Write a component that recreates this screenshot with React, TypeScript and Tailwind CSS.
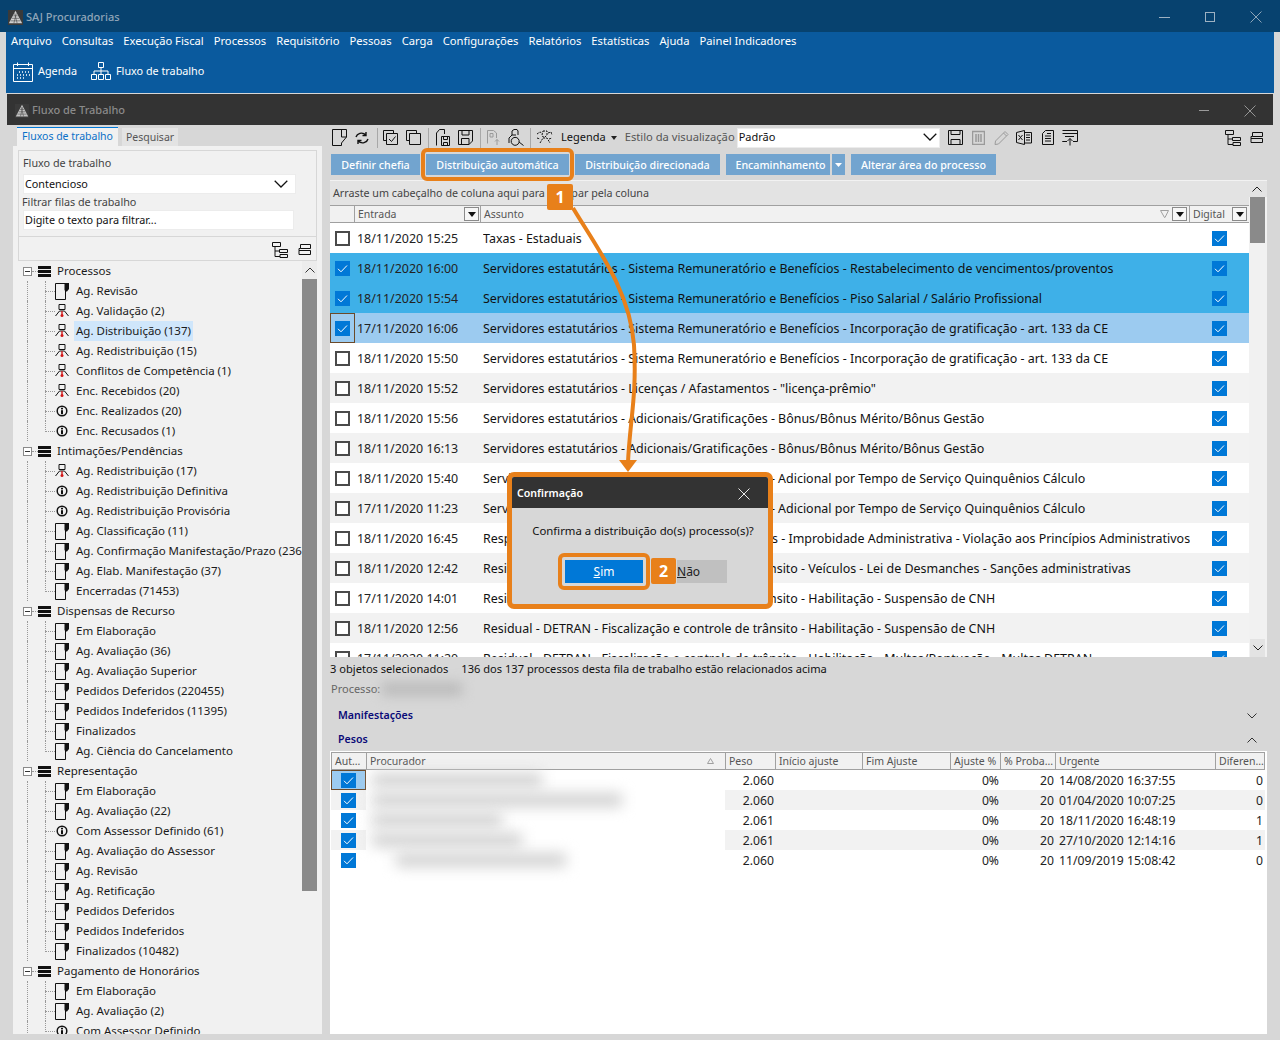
import React from "react";

const FONT = "[font-family:'Noto_Sans','Open_Sans',sans-serif]";

const Logo = ({ s = 18, c = "#c8c8c8" }: { s?: number; c?: string }) => (
  <svg width={s} height={s} viewBox="0 0 18 18" className="shrink-0">
    <rect width="18" height="18" fill="#3a3a3a" />
    <polygon points="9,1 17,16 1,16" fill={c} />
    <g stroke="#444" strokeWidth="0.7">
      <line x1="3" y1="13" x2="15" y2="13" />
      <line x1="4.8" y1="10" x2="13.2" y2="10" />
      <line x1="6.4" y1="7" x2="11.6" y2="7" />
      <line x1="7" y1="16" x2="10" y2="4" />
      <line x1="11" y1="16" x2="8" y2="4" />
    </g>
  </svg>
);

const WinX = ({ s, c }: { s: number; c: string }) => (
  <svg width={s} height={s} viewBox="0 0 12 12"><path d="M0.5 0.5L11.5 11.5M11.5 0.5L0.5 11.5" stroke={c} strokeWidth="0.9" fill="none" /></svg>
);

const Check = ({ on, s = 15 }: { on: boolean; s?: number }) =>
  on ? (
    <svg width={s} height={s} viewBox="0 0 15 15" className="shrink-0">
      <rect width="15" height="15" fill="#0078d7" />
      <path d="M3 7.8L6 10.8L12 4.5" stroke="#fff" strokeWidth="1" fill="none" />
    </svg>
  ) : (
    <span className="block w-[15px] h-[15px] shrink-0 border-2 border-[#4a4a4a] bg-white" />
  );

const Ic = ({ w = 16, h = 16, children }: { w?: number; h?: number; children: React.ReactNode }) => (
  <svg width={w} height={h} viewBox={`0 0 ${w} ${h}`} fill="none" stroke="#111" strokeWidth="1" className="shrink-0">{children}</svg>
);

const DocIcon = () => (
  <svg width="14" height="17" viewBox="0 0 14 17" className="shrink-0" fill="none">
    <path d="M10 0.5H0.5V16.5H10.5V8" stroke="#111" />
    <path d="M9.5 0H14V6L12 8.5H10.5L9.5 7Z" fill="#111" />
  </svg>
);
const PersonIcon = () => (
  <svg width="14" height="16" viewBox="0 0 14 16" className="shrink-0" fill="none">
    <path d="M4 1.5H10V6.5H4Z" stroke="#111" />
    <path d="M4.5 8H9.5M4.5 8L0.5 13M9.5 8L13.5 13" stroke="#111" />
    <path d="M7 8V12" stroke="#d01818" strokeWidth="1.4" />
    <circle cx="7" cy="12.5" r="1.5" fill="#d01818" />
  </svg>
);
const InfoIcon = () => (
  <svg width="14" height="14" viewBox="0 0 14 14" className="shrink-0" fill="none">
    <circle cx="7" cy="7" r="4.8" stroke="#111" strokeWidth="1.5" />
    <rect x="6" y="3.8" width="2" height="1.6" fill="#111" />
    <rect x="6" y="6.2" width="2" height="4" fill="#111" />
  </svg>
);
const GroupIcon = () => (
  <svg width="13" height="11" viewBox="0 0 13 11" className="shrink-0">
    <rect width="13" height="3" fill="#111" />
    <rect y="4" width="13" height="3" fill="#111" />
    <rect y="8" width="13" height="3" fill="#111" />
  </svg>
);

const ExpandAll = () => (
  <Ic w={16} h={16}>
    <path d="M0.5 0.5H8.5V4.5H0.5ZM3 4.5V14.5H8M3 9H7M7.5 7.5H15.5V10.5H7.5ZM8 12.5H15.5V15.5H8Z" />
  </Ic>
);
const CollapseAll = () => (
  <Ic w={14} h={14}>
    <path d="M2.5 1.5H12.5V5.5H2.5ZM1 7.5H12.5V11.5H1ZM1 7.5V5.5H2.5" />
  </Ic>
);

type Kind = "doc" | "person" | "info";
type Node = { t: string; k: Kind; sel?: boolean };
const tree: { name: string; items: Node[] }[] = [
  {
    name: "Processos",
    items: [
      { t: "Ag. Revisão", k: "doc" },
      { t: "Ag. Validação (2)", k: "person" },
      { t: "Ag. Distribuição (137)", k: "person", sel: true },
      { t: "Ag. Redistribuição (15)", k: "person" },
      { t: "Conflitos de Competência (1)", k: "person" },
      { t: "Enc. Recebidos (20)", k: "person" },
      { t: "Enc. Realizados (20)", k: "info" },
      { t: "Enc. Recusados (1)", k: "info" },
    ],
  },
  {
    name: "Intimações/Pendências",
    items: [
      { t: "Ag. Redistribuição (17)", k: "person" },
      { t: "Ag. Redistribuição Definitiva", k: "info" },
      { t: "Ag. Redistribuição Provisória", k: "info" },
      { t: "Ag. Classificação (11)", k: "doc" },
      { t: "Ag. Confirmação Manifestação/Prazo (236)", k: "doc" },
      { t: "Ag. Elab. Manifestação (37)", k: "doc" },
      { t: "Encerradas (71453)", k: "doc" },
    ],
  },
  {
    name: "Dispensas de Recurso",
    items: [
      { t: "Em Elaboração", k: "doc" },
      { t: "Ag. Avaliação (36)", k: "doc" },
      { t: "Ag. Avaliação Superior", k: "doc" },
      { t: "Pedidos Deferidos (220455)", k: "doc" },
      { t: "Pedidos Indeferidos (11395)", k: "doc" },
      { t: "Finalizados", k: "doc" },
      { t: "Ag. Ciência do Cancelamento", k: "doc" },
    ],
  },
  {
    name: "Representação",
    items: [
      { t: "Em Elaboração", k: "doc" },
      { t: "Ag. Avaliação (22)", k: "doc" },
      { t: "Com Assessor Definido (61)", k: "info" },
      { t: "Ag. Avaliação do Assessor", k: "doc" },
      { t: "Ag. Revisão", k: "doc" },
      { t: "Ag. Retificação", k: "doc" },
      { t: "Pedidos Deferidos", k: "doc" },
      { t: "Pedidos Indeferidos", k: "doc" },
      { t: "Finalizados (10482)", k: "doc" },
    ],
  },
  {
    name: "Pagamento de Honorários",
    items: [
      { t: "Em Elaboração", k: "doc" },
      { t: "Ag. Avaliação (2)", k: "doc" },
      { t: "Com Assessor Definido", k: "info" },
    ],
  },
];

const SV = "Servidores estatutários - Sistema Remuneratório e Benefícios - ";
const AD = "Servidores estatutários - Adicionais/Gratificações - ";
const DT = "Residual - DETRAN - Fiscalização e controle de trânsito - ";
const rows = [
  { d: "18/11/2020 15:25", s: "Taxas - Estaduais" },
  { d: "18/11/2020 16:00", s: SV + "Restabelecimento de vencimentos/proventos", st: "sel" },
  { d: "18/11/2020 15:54", s: SV + "Piso Salarial / Salário Profissional", st: "sel" },
  { d: "17/11/2020 16:06", s: SV + "Incorporação de gratificação - art. 133 da CE", st: "cur" },
  { d: "18/11/2020 15:50", s: SV + "Incorporação de gratificação - art. 133 da CE" },
  { d: "18/11/2020 15:52", s: 'Servidores estatutários - Licenças / Afastamentos - "licença-prêmio"' },
  { d: "18/11/2020 15:56", s: AD + "Bônus/Bônus Mérito/Bônus Gestão" },
  { d: "18/11/2020 16:13", s: AD + "Bônus/Bônus Mérito/Bônus Gestão" },
  { d: "18/11/2020 15:40", s: AD + "Adicional por Tempo de Serviço Quinquênios Cálculo" },
  { d: "17/11/2020 11:23", s: AD + "Adicional por Tempo de Serviço Quinquênios Cálculo" },
  { d: "18/11/2020 16:45", s: "Responsabilidade do Estado - Atos Administrativos - Improbidade Administrativa - Violação aos Princípios Administrativos" },
  { d: "18/11/2020 12:42", s: DT + "Veículos - Lei de Desmanches - Sanções administrativas" },
  { d: "17/11/2020 14:01", s: DT + "Habilitação - Suspensão de CNH" },
  { d: "18/11/2020 12:56", s: DT + "Habilitação - Suspensão de CNH" },
  { d: "17/11/2020 11:20", s: DT + "Habilitação - Multas/Pontuação - Multas DETRAN" },
];

const pesos = [
  { p: "2.060", u: "14/08/2020 16:37:55", x: "0", b: "w-[170px] ml-[6px]" },
  { p: "2.060", u: "01/04/2020 10:07:25", x: "0", b: "w-[250px] ml-[6px]" },
  { p: "2.061", u: "18/11/2020 16:48:19", x: "1", b: "w-[130px] ml-[6px]" },
  { p: "2.061", u: "27/10/2020 12:14:16", x: "1", b: "w-[150px] ml-[6px]" },
  { p: "2.060", u: "11/09/2019 15:08:42", x: "0", b: "w-[170px] ml-[30px]" },
];

const menu = ["Arquivo", "Consultas", "Execução Fiscal", "Processos", "Requisitório", "Pessoas", "Carga", "Configurações", "Relatórios", "Estatísticas", "Ajuda", "Painel Indicadores"];

const Sep = () => <span className="block w-px h-5 bg-[#a8a8a8] shrink-0" />;

const HdrDrop = () => (
  <span className="w-[15px] h-[14px] border border-[#8a8a8a] bg-[#f6f6f6] flex items-center justify-center shrink-0">
    <svg width="8" height="5" viewBox="0 0 8 5"><path d="M0 0H8L4 5Z" fill="#111" /></svg>
  </span>
);

const Chevron = ({ up, c = "#333", w = 10 }: { up?: boolean; c?: string; w?: number }) => (
  <svg width={w} height={w * 0.6} viewBox="0 0 10 6" fill="none" className="shrink-0">
    <path d={up ? "M0.5 5.5L5 1L9.5 5.5" : "M0.5 0.5L5 5L9.5 0.5"} stroke={c} strokeWidth={w > 10 ? 0.9 : 1} />
  </svg>
);

const Btn = ({ w, children }: { w: string; children: React.ReactNode }) => (
  <div className={`${w} h-[21px] pt-[2px] bg-[#72a4cf] text-white font-medium flex items-center justify-center text-[10.7px] shrink-0`}>{children}</div>
);

export default function App() {
  return (
    <div className={`${FONT} relative w-[1280px] h-[1040px] overflow-hidden bg-[#d7d7d7] text-[12px] text-[#1a1a1a] flex flex-col`}>
      {/* Title bar */}
      <div className="h-8 shrink-0 bg-[#07426f] flex items-center pl-[8px] pt-[2px] text-[11px] font-medium text-[#8fa5b8]">
        <Logo s={15} c="#d0d0d0" />
        <span className="ml-[3px] flex-1">SAJ Procuradorias</span>
        <span className="w-[11px] h-px bg-[#9db1c2]" />
        <span className="ml-[35px] w-[10px] h-[10px] border border-[#9db1c2]" />
        <span className="ml-[35px] mr-[18px]"><WinX s={12} c="#9db1c2" /></span>
      </div>

      {/* Menu */}
      <div className="h-[61px] shrink-0 ml-[6px] mr-[6px] bg-[#0a5a9e] text-white flex flex-col">
        <div className="h-[20px] flex items-center gap-[10px] pl-[5px] pb-[2px] text-[11.2px]">
          {menu.map((m) => <span key={m}>{m}</span>)}
        </div>
        <div className="flex-1 flex items-center pl-[7px] pb-[2px] text-[10.8px]">
          <svg width="20" height="20" viewBox="0 0 20 20" fill="none" stroke="#fff" className="shrink-0">
            <path d="M0.5 2.5H19.5V19.5H0.5ZM0.5 6.5H19.5M4.5 0.5V4M15.5 0.5V4" />
            <path d="M6 10h1M9 10h1M12 10h1M15 10h1M4 13h1M7 13h1M10 13h1M13 13h1M16 13h1M4 16h1M7 16h1M10 16h1" strokeWidth="1.4" />
          </svg>
          <span className="ml-[5px]">Agenda</span>
          <svg width="20" height="19" viewBox="0 0 20 19" fill="none" stroke="#fff" className="ml-[14px] shrink-0">
            <path d="M7.5 0.5H12.5V5.5H7.5ZM10 5.5V9M3 12V9H17V12M10 9V12M0.5 12.5H5.5V17.5H0.5ZM7.5 12.5H12.5V17.5H7.5ZM14.5 12.5H19.5V17.5H14.5Z" />
          </svg>
          <span className="ml-[5px]">Fluxo de trabalho</span>
        </div>
      </div>

      {/* Inner window title */}
      <div className="h-[31px] mt-[1px] shrink-0 ml-[7px] mr-[7px] bg-[#333] flex items-center pl-[8px] pt-[2px] text-[11px] font-medium text-[#8a8a8a]">
        <Logo s={14} c="#c4c4c4" />
        <span className="ml-[3px] flex-1">Fluxo de Trabalho</span>
        <span className="w-[10px] h-px bg-[#9a9a9a]" />
        <span className="ml-[35px] mr-[17px]"><WinX s={12} c="#a0a0a0" /></span>
      </div>

      {/* Body */}
      <div className="flex-1 min-h-0 flex pb-[6px]">
        {/* Left column */}
        <div className="w-[322px] shrink-0 pl-[13px] flex flex-col">
          <div className="h-[21px] shrink-0 flex items-end pl-[4px] text-[10.5px]">
            <div className="h-[19px] w-[101px] border-t border-[#0078d7] bg-[#f1f1f1] text-[#0a70c8] text-center leading-[17px]">Fluxos de trabalho</div>
            <div className="ml-[4px] h-[18px] w-[56px] bg-[#e3e3e3] text-[#555] text-center leading-[18px]">Pesquisar</div>
          </div>
          <div className="flex-1 min-h-0 bg-[#f1f1f1] flex flex-col">
            <div className="mx-[5px] mt-[4px] border border-[#d7d7d7] h-[87px] shrink-0 px-[4px] pt-[4px] text-[10.8px] text-[#444]">
              <div className="leading-[15px]">Fluxo de trabalho</div>
              <div className="mt-[4px] w-[273px] h-[20px] bg-white border border-[#ececec] flex items-center pl-[1px] pr-[7px] text-[#111]">
                <span className="flex-1">Contencioso</span>
                <Chevron c="#111" w={14} />
              </div>
              <div className="leading-[15px] -ml-[1px]">Filtrar filas de trabalho</div>
              <div className="mt-[1px] w-[271px] h-[20px] bg-white border border-[#ececec] flex items-center pl-[1px] text-[#111]">Digite o texto para filtrar...</div>
            </div>
            <div className="mx-[5px] h-[24px] shrink-0 flex items-center justify-end gap-[10px] pr-[4px] border-x border-b border-[#d7d7d7] pt-[2px]">
              <ExpandAll />
              <CollapseAll />
            </div>
            <div className="flex-1 min-h-0 mx-[5px] flex overflow-hidden">
              <div className="flex-1 min-w-0 overflow-hidden text-[11.5px] leading-[20px]">
                {tree.map((g) => (
                  <div key={g.name}>
                    <div className="h-5 flex items-center">
                      <span className="ml-[5px] w-[9px] h-[9px] border border-[#8a8a8a] bg-white flex items-center justify-center shrink-0">
                        <span className="w-[5px] h-px bg-[#333]" />
                      </span>
                      <span className="w-[6px] border-t border-dotted border-[#999] shrink-0" />
                      <GroupIcon />
                      <span className="ml-[6px] whitespace-nowrap">{g.name}</span>
                    </div>
                    {g.items.map((n, i) => (
                      <div key={n.t + i} className="h-5 flex items-center">
                        <span className="ml-[9px] w-[18px] h-full border-l border-dotted border-[#999] shrink-0" />
                        <span className={`w-[8px] border-l border-dotted border-[#999] shrink-0 ${i === g.items.length - 1 ? "h-[11px] self-start" : "h-full"}`} />
                        <span className="-ml-[8px] w-[10px] border-t border-dotted border-[#999] shrink-0" />
                        <span className="w-[14px] flex justify-center shrink-0">
                          {n.k === "doc" ? <DocIcon /> : n.k === "person" ? <PersonIcon /> : <InfoIcon />}
                        </span>
                        <span className={`ml-[5px] px-[2px] whitespace-nowrap ${n.sel ? "bg-[#cfe6fb]" : ""}`}>{n.t}</span>
                      </div>
                    ))}
                  </div>
                ))}
              </div>
              <div className="w-[15px] shrink-0 flex flex-col bg-[#f1f1f1]">
                <div className="h-[18px] bg-[#ececec] flex items-center justify-center shrink-0"><Chevron up /></div>
                <div className="h-[612px] bg-[#8a8a8a] shrink-0" />
              </div>
            </div>
          </div>
        </div>

        {/* Right column */}
        <div className="ml-[8px] w-[937px] shrink-0 flex flex-col">
          {/* Toolbar */}
          <div className="h-[29px] shrink-0 flex items-center pl-[2px] pb-[4px] text-[11px]">
            <Ic w={15} h={17}><path d="M0.5 0.5H14.5V8L9.5 14V16.5H0.5ZM9.5 0.5V8H14.5" /></Ic>
            <svg width="14" height="14" viewBox="0 0 14 14" fill="none" stroke="#111" strokeWidth="1.4" className="ml-[8px] shrink-0">
              <path d="M1 6C2 2.5 7 0.5 11 4M11 1V4.5H7.5M13 8C12 11.5 7 13.5 3 10M3 13V9.5H6.5" />
            </svg>
            <span className="ml-[8px]"><Sep /></span>
            <span className="ml-[5px]"><Ic w={15} h={15}><path d="M0.5 0.5H10.5V3.5M0.5 0.5V10.5H3.5M3.5 3.5H14.5V14.5H3.5ZM6 9L8.5 11.5L12.5 6.5" /></Ic></span>
            <span className="ml-[8px]"><Ic w={15} h={15}><path d="M0.5 0.5H10.5V3.5M0.5 0.5V10.5H3.5M3.5 3.5H14.5V14.5H3.5Z" /></Ic></span>
            <span className="ml-[7px]"><Sep /></span>
            <span className="ml-[6px]"><Ic w={15} h={17}><path d="M1.5 16.5V4L4.5 0.5H9.5V5M6.5 7.5H14.5V16.5H6.5ZM8.5 7.5V10.5H12.5V7.5M8.5 13.5H12.5V16.5H8.5Z" /></Ic></span>
            <span className="ml-[8px]"><Ic w={15} h={15}><path d="M0.5 0.5H14.5V11L11 14.5H0.5ZM4 0.5V5H11V0.5M3.5 14.5V8.5H11V14.5" /></Ic></span>
            <span className="ml-[7px]"><Sep /></span>
            <span className="ml-[6px] opacity-30"><Ic w={13} h={16}><path d="M0.5 13.5V0.5H6.5L9.5 3V8M3 3.5H6V7H3ZM10 9.5V15M8 11.5L10 9.5L12 11.5" /></Ic></span>
            <span className="ml-[8px]"><Ic w={17} h={17}><path d="M4 6V2L6 0.5H9L10 2V6M1 14V9L4 6H8M6 8.5a4 4 0 1 0 5 5 4 4 0 0 0-5-5ZM11 13L15.5 16.5" /></Ic></span>
            <span className="ml-[5px]"><Sep /></span>
            <span className="ml-[5px]"><Ic w={17} h={16}><path d="M7 1H11V5L9 7H7L6 5ZM4 13L7 8H11L14 13M1 4L4 2L6 3M1 8L4 9M12 3L15 2L16 5M13 9L16 8" strokeDasharray="2 1" /></Ic></span>
            <span className="ml-[8px] text-[#111]">Legenda</span>
            <svg width="6" height="4" viewBox="0 0 6 4" className="ml-[5px] shrink-0"><path d="M0 0H6L3 4Z" fill="#222" /></svg>
            <span className="ml-[8px] text-[#555] text-[11.2px] whitespace-nowrap">Estilo da visualização</span>
            <div className="ml-[2px] w-[203px] h-[20px] bg-white border border-[#ececec] flex items-center pl-[1px] pr-[2px] shrink-0 text-[#111]">
              <span className="flex-1">Padrão</span>
              <Chevron c="#111" w={14} />
            </div>
            <span className="ml-[8px]"><Ic w={15} h={15}><path d="M0.5 0.5H14.5V14.5H0.5ZM3 0.5V4.5H12V0.5M3 14.5V9.5H12V14.5" /></Ic></span>
            <span className="ml-[9px] opacity-30"><Ic w={13} h={15}><path d="M0.5 1.5H12.5V14.5H0.5ZM4 4V12M6.5 4V12M9 4V12" strokeWidth="1.5" /></Ic></span>
            <span className="ml-[9px] opacity-30"><Ic w={15} h={15}><path d="M1 14.5L1.5 11L11 1.5L14 4.5L4.5 14ZM9.5 3L12.5 6" /></Ic></span>
            <span className="ml-[7px]"><Ic w={16} h={15}><path d="M0.5 2.5L8.5 0.5V14.5L0.5 12.5ZM8.5 2.5H15.5V13H8.5M10 5H14M10 7.5H14M10 10H14M2.5 5L6.5 10M6.5 5L2.5 10" /></Ic></span>
            <span className="ml-[10px]"><Ic w={12} h={15}><path d="M3.5 0.5H11.5V14.5H0.5V3.5ZM3 6H9M3 8.5H9M3 11H9M5 3.5H9" /></Ic></span>
            <span className="ml-[8px]"><Ic w={16} h={16}><path d="M0.5 0.5H15.5V11.5H11M5 11.5H0.5ZM0.5 3.5H15.5M3 6.5H12M8 15.5V8.5M5.5 11L8 8.5L10.5 11" /></Ic></span>
            <span className="ml-auto flex items-center gap-[9px] pr-[3px]">
              <ExpandAll />
              <CollapseAll />
            </span>
          </div>

          {/* Buttons */}
          <div className="h-[21px] shrink-0 flex gap-[6px] relative ml-[1px] whitespace-nowrap">
            <Btn w="w-[89px]">Definir chefia</Btn>
            <Btn w="w-[143px]">Distribuição automática</Btn>
            <Btn w="w-[145px]">Distribuição direcionada</Btn>
            <div className="flex gap-[2px] shrink-0">
              <Btn w="w-[104px] pl-[5px]">Encaminhamento</Btn>
              <div className="w-[13px] h-[21px] bg-[#72a4cf] flex items-center justify-center"><svg width="7" height="4" viewBox="0 0 7 4"><path d="M0 0H7L3.5 4Z" fill="#fff" /></svg></div>
            </div>
            <Btn w="w-[145px]">Alterar área do processo</Btn>
          </div>

          {/* Grid */}
          <div className="mt-[5px] h-[477px] shrink-0 bg-white border-t border-[#f2f2f2] flex overflow-hidden">
            <div className="w-[919px] shrink-0 flex flex-col">
              <div className="h-[24px] shrink-0 bg-[#e3e3e3] flex items-center pl-[3px] text-[10.73px] text-[#444]">Arraste um cabeçalho de coluna aqui para agrupar pela coluna</div>
              <div className="h-[18px] shrink-0 bg-[#f1f1f1] border-y border-[#a0a0a0] flex items-center text-[10.5px] text-[#555]">
                <span className="w-[24px] shrink-0" />
                <span className="w-[126px] h-full shrink-0 border-l border-[#a0a0a0] pl-[3px] flex items-center justify-between pr-[1px]"><span className="pt-[2px]">Entrada</span> <HdrDrop /></span>
                <span className="flex-1 h-full border-l border-[#a0a0a0] pl-[3px] flex items-center">
                  <span className="flex-1 pt-[2px]">Assunto</span>
                  <svg width="9" height="8" viewBox="0 0 9 8" fill="none" className="mr-[3px]"><path d="M0.5 0.5H8.5L5 7.5H4.5Z" stroke="#a0a0a0" /></svg>
                  <HdrDrop />
                </span>
                <span className="w-[60px] h-full shrink-0 border-l border-[#a0a0a0] ml-[2px] pl-[3px] pr-[2px] flex items-center justify-between"><span className="pt-[2px]">Digital</span> <HdrDrop /></span>
              </div>
              <div className="flex-1 min-h-0 overflow-hidden text-[12.45px]">
                {rows.map((r, i) => (
                  <div
                    key={i}
                    className={`h-[30px] flex items-center ${r.st === "sel" ? "bg-[#3eb0e8]" : r.st === "cur" ? "bg-[#9ccbf0]" : i % 2 ? "bg-[#f2f2f2]" : "bg-white"}`}
                  >
                    <span className={`w-[25px] h-full shrink-0 flex items-center justify-center ${r.st === "cur" ? "border border-[#6b4a2a]" : ""}`}><Check on={!!r.st} /></span>
                    <span className="w-[128px] pl-[2px] pt-[2px] shrink-0 text-[#222]">{r.d}</span>
                    <span className="w-[707px] pt-[2px] shrink-0 whitespace-nowrap overflow-hidden text-[#111]">{r.s}</span>
                    <span className="flex-1 flex justify-center pr-[1px]"><Check on /></span>
                  </div>
                ))}
              </div>
            </div>
            <div className="w-[18px] shrink-0 bg-[#f1f1f1] flex flex-col">
              <div className="h-[16px] bg-[#e3e3e3] flex items-center justify-center shrink-0 pr-[3px]"><Chevron up c="#222" /></div>
              <div className="ml-[1px] w-[15px] h-[46px] bg-[#8a8a8a] shrink-0" />
              <div className="flex-1" />
              <div className="ml-[1px] w-[15px] h-[18px] bg-[#e3e3e3] flex items-center justify-center shrink-0"><Chevron c="#222" /></div>
            </div>
          </div>

          {/* Status */}
          <div className="h-[24px] shrink-0 flex items-center text-[11.1px] text-[#111] whitespace-nowrap">
            <span>3 objetos selecionados</span>
            <span className="ml-[13px]">136 dos 137 processos desta fila de trabalho estão relacionados acima</span>
          </div>
          <div className="h-[16px] shrink-0 flex items-center text-[11px] text-[#666]">
            <span className="ml-[1px]">Processo:</span>
            <span className="ml-[2px] w-[80px] h-[14px] bg-[#bcbcbc] blur-[6px]" />
          </div>
          <div className="h-[36px] shrink-0 flex items-center justify-between pl-[8px] pr-[10px] pt-[2px] text-[10.6px] font-semibold text-[#0a0a78]">
            <span>Manifestações</span><Chevron c="#333" w={10} />
          </div>
          <div className="h-[12px] shrink-0 flex items-center justify-between pl-[8px] pr-[10px] pt-[2px] text-[10.6px] font-semibold text-[#0a0a78]">
            <span>Pesos</span><Chevron up c="#333" w={10} />
          </div>

          {/* Pesos table */}
          <div className="mt-[6px] flex-1 min-h-0 bg-white overflow-hidden">
            <div className="mt-[1px] ml-[1px] mr-[2px] h-[18px] pt-0 bg-[#f1f1f1] border-y border-[#a0a0a0] border-x flex items-center text-[10.5px] text-[#555] whitespace-nowrap leading-[18px]">
              <span className="w-[34px] pl-[3px] shrink-0">Aut...</span>
              <span className="w-[359px] h-full shrink-0 border-l border-[#a0a0a0] pl-[3px] pr-[11px] flex items-center justify-between">
                Procurador
                <svg width="7" height="6" viewBox="0 0 7 6" fill="none"><path d="M0.5 5.5H6.5L3.5 0.5Z" stroke="#a0a0a0" /></svg>
              </span>
              <span className="w-[50px] h-full shrink-0 border-l border-[#a0a0a0] pl-[3px] flex items-center">Peso</span>
              <span className="w-[87px] h-full shrink-0 border-l border-[#a0a0a0] pl-[3px] flex items-center">Início ajuste</span>
              <span className="w-[88px] h-full shrink-0 border-l border-[#a0a0a0] pl-[3px] flex items-center">Fim Ajuste</span>
              <span className="w-[50px] h-full shrink-0 border-l border-[#a0a0a0] pl-[3px] flex items-center">Ajuste %</span>
              <span className="w-[55px] h-full shrink-0 border-l border-[#a0a0a0] pl-[3px] flex items-center">% Proba...</span>
              <span className="w-[160px] h-full shrink-0 border-l border-[#a0a0a0] pl-[3px] flex items-center">Urgente</span>
              <span className="flex-1 h-full border-l border-[#a0a0a0] pl-[3px] flex items-center">Diferen...</span>
            </div>
            {pesos.map((r, i) => (
              <div key={i} className={`h-5 flex items-center ml-[1px] mr-[2px] text-[12.2px] text-[#222] ${i % 2 ? "bg-[#f2f2f2]" : "bg-white"}`}>
                <span className={`w-[35px] h-full shrink-0 flex items-center justify-center ${i === 0 ? "bg-[#9ccbf0] border border-[#6b4a2a]" : ""}`}><Check on /></span>
                <span className="w-[359px] h-full shrink-0 bg-white flex items-center"><span className={`${r.b} h-[14px] bg-[#d2d2d2] blur-[7px] block relative z-10`} /></span>
                <span className="w-[49px] pt-[2px] text-right shrink-0">{r.p}</span>
                <span className="w-[225px] pt-[2px] text-right shrink-0">0%</span>
                <span className="w-[55px] pt-[2px] text-right shrink-0">20</span>
                <span className="w-[160px] pt-[2px] pl-[5px] shrink-0">{r.u}</span>
                <span className="flex-1 pt-[2px] text-right pr-[2px]">{r.x}</span>
              </div>
            ))}
          </div>
        </div>
      </div>

      {/* Annotations */}
      <svg width="1280" height="1040" viewBox="0 0 1280 1040" fill="none" className="absolute inset-0 pointer-events-none">
        <path d="M573 208C595 245 630 290 634 345C637 395 630 420 628 462" stroke="#e8801a" strokeWidth="4" />
        <path d="M619 460H637L628 472Z" fill="#e8801a" />
      </svg>
      <div className="absolute left-[421px] top-[148px] w-[153px] h-[33px] border-[4px] border-[#e8801a] rounded-[6px]" />
      <div className="absolute left-[547px] top-[184px] w-[26px] h-[26px] bg-[#e8801a] rounded-[2px] flex items-center justify-center text-white text-[16px] font-bold">1</div>

      {/* Dialog */}
      <div className="absolute left-[507px] top-[472px] w-[266px] h-[137px] border-[5px] border-[#e8801a] rounded-[7px] overflow-hidden flex flex-col bg-[#d7d7d7]">
        <div className="h-[31px] bg-[#333] flex items-center justify-between pl-[5px] pr-[18px] pt-[2px] text-white text-[10.6px] font-semibold shrink-0">
          <span>Confirmação</span>
          <WinX s={12} c="#fff" />
        </div>
        <div className="text-center pt-[14px] text-[11.35px] text-[#111] h-[52px] shrink-0 pl-[6px] whitespace-nowrap">Confirma a distribuição do(s) processo(s)?</div>
        <div className="flex items-center pl-[53px]">
          <div className="w-[78px] h-[23px] bg-[#0078d7] text-white flex items-center justify-center text-[12px]"><span><span className="underline">S</span>im</span></div>
          <div className="ml-[34px] w-[50px] h-[23px] bg-[#c0c0c0] flex items-center text-[12px] text-[#222]"><span><span className="underline">N</span>ão</span></div>
        </div>
      </div>
      <div className="absolute left-[558px] top-[553px] w-[92px] h-[37px] border-[4px] border-[#e8801a] rounded-[6px]" />
      <div className="absolute left-[651px] top-[558px] w-[25px] h-[26px] bg-[#e8801a] rounded-[2px] flex items-center justify-center text-white text-[16px] font-bold">2</div>
    </div>
  );
}
